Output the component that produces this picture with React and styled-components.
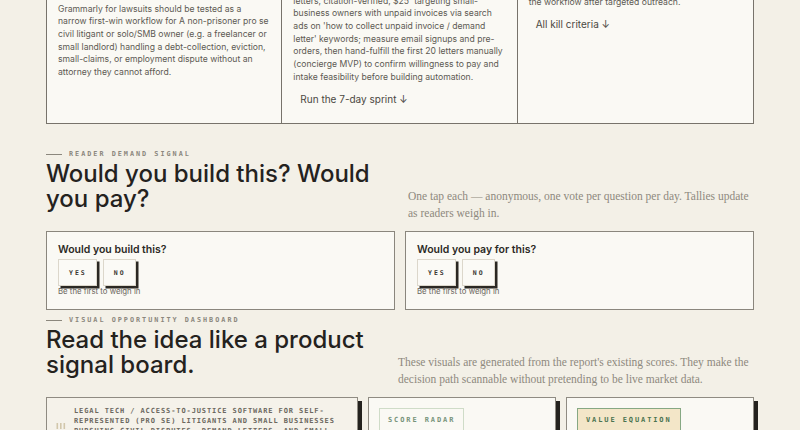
import React from 'react';
import styled, { createGlobalStyle } from 'styled-components';

const GlobalStyle = createGlobalStyle`
  body {
    margin: 0;
    background: #f3f0e7;
  }
  * {
    box-sizing: border-box;
  }
`;

const sans = `Inter, 'Liberation Sans', sans-serif`;
const mono = `'DejaVu Sans Mono', 'Liberation Mono', monospace`;
const serif = `'Liberation Serif', 'DejaVu Serif', serif`;

const Page = styled.div`
  width: 708px;
  margin: -7px auto 0;
  padding-bottom: 40px;
  font-family: ${sans};
`;

const TopRow = styled.div`
  display: grid;
  grid-template-columns: repeat(3, 1fr);
  min-height: 131px;
  border: 1px solid #77736b;
  border-top: none;
  background: #faf9f4;
`;

const PlanCard = styled.div`
  display: flex;
  flex-direction: column;
  align-items: flex-start;
  padding: ${(p) => p.lead}px ${(p) => p.right || 8}px 12px 11px;
  border-right: ${(p) => (p.last ? 'none' : '1px solid #77736b')};
`;

const PlanText = styled.p`
  margin: 0;
  font-size: 8.65px;
  line-height: 12.7px;
  color: #5d5a53;
`;

const PlanLink = styled.a`
  margin-top: 9px;
  padding-left: 7px;
  font-size: 10px;
  line-height: 14px;
  color: #4b4842;
  cursor: pointer;
`;

const SectionHead = styled.header`
  display: grid;
  grid-template-columns: ${(p) => p.left}px 1fr;
  align-items: end;
  margin-top: ${(p) => p.top}px;
`;

const HeadLeft = styled.div`
  padding-bottom: 11px;
`;

const Eyebrow = styled.div`
  display: flex;
  align-items: center;
  gap: 7px;
  font-family: ${mono};
  font-size: 6.8px;
  line-height: 10px;
  font-weight: 700;
  letter-spacing: 2px;
  text-transform: uppercase;
  color: #8b877d;

  &::before {
    content: '';
    width: 16px;
    height: 1px;
    background: #8b877d;
  }
`;

const Heading = styled.h2`
  margin: 2px 0 0;
  font-size: 24px;
  line-height: 25px;
  font-weight: 500;
  letter-spacing: 0;
  color: #24221e;
`;

const Lede = styled.p`
  margin: 0;
  font-family: ${serif};
  font-size: 11.5px;
  line-height: 17px;
  color: #8e897e;
`;

const VoteGrid = styled.div`
  display: grid;
  grid-template-columns: 1fr 1fr;
  gap: 10px;
  margin-top: 9px;
`;

const VoteCard = styled.div`
  padding: 11px 11px 13px;
  border: 1px solid #8a867d;
  background: #faf9f4;
`;

const VoteTitle = styled.div`
  font-size: 10.5px;
  line-height: 13px;
  font-weight: 600;
  color: #2b2925;
`;

const VoteButtons = styled.div`
  display: flex;
  gap: 6px;
  margin-top: 3px;
`;

const VoteButton = styled.button`
  height: 27px;
  padding: 0 9px 0 10px;
  border: 1px solid #dcd7cb;
  background: #fbfaf6;
  box-shadow: 2.5px 2.5px 0 #2b2823;
  font-family: ${mono};
  font-size: 6.5px;
  font-weight: 700;
  letter-spacing: 2px;
  color: #3a3731;
  cursor: pointer;
`;

const VoteNote = styled.div`
  font-size: 7.8px;
  line-height: 10px;
  color: #6a665e;
`;

const BoardGrid = styled.div`
  display: grid;
  grid-template-columns: 312px 1fr 1fr;
  gap: 10px;
  margin-top: 9px;
`;

const BoardCard = styled.div`
  display: flex;
  align-items: flex-start;
  gap: 8px;
  min-height: 60px;
  padding: ${(p) => (p.tone === 'tan' ? '8px 20px 8px 9px' : '10px')};
  border: 1px solid #8f8b82;
  background: ${(p) => (p.tone === 'tan' ? '#f5f2ea' : '#faf9f4')};
  box-shadow: 4px 4px 0 #24221e;
`;

const Segment = styled.div`
  font-family: ${mono};
  font-size: 7px;
  line-height: 10px;
  font-weight: 700;
  letter-spacing: 0.9px;
  color: #6c685f;
  text-transform: uppercase;
`;

const Tag = styled.span`
  display: inline-block;
  padding: 7px 8px 6px;
  font-family: ${mono};
  font-size: 7px;
  line-height: 9px;
  font-weight: 700;
  letter-spacing: 1.9px;
  border: 1px solid ${(p) => (p.strong ? '#86a883' : '#cfdcc8')};
  background: ${(p) => (p.strong ? '#f3e6c8' : 'transparent')};
  color: ${(p) => (p.strong ? '#4a7350' : '#77937a')};
`;

const BarsIcon = styled.svg`
  flex: none;
  margin-top: 15px;
`;

const Bars = () => (
  <BarsIcon width="10" height="8" viewBox="0 0 10 8">
    <rect x="0.5" y="2" width="1.6" height="6" fill="#d2c7ab" />
    <rect x="4" y="2" width="1.6" height="6" fill="#d2c7ab" />
    <rect x="7.5" y="2" width="1.6" height="6" fill="#d2c7ab" />
  </BarsIcon>
);

export default function App() {
  return (
    <>
      <GlobalStyle />
      <Page>
        <TopRow>
          <PlanCard lead={9.5} right={12}>
            <PlanText>
              Grammarly for lawsuits should be tested as a narrow first-win workflow for A
              non-prisoner pro se civil litigant or solo/SMB owner (e.g. a freelancer or small
              landlord) handling a debt-collection, eviction, small-claims, or employment dispute
              without an attorney they cannot afford.
            </PlanText>
          </PlanCard>
          <PlanCard lead={1.5}>
            <PlanText>
              letters, citation-verified, $25' targeting small-business owners with unpaid
              invoices via search ads on 'how to collect unpaid invoice / demand letter' keywords;
              measure email signups and pre-orders, then hand-fulfill the first 20 letters
              manually (concierge MVP) to confirm willingness to pay and intake feasibility before
              building automation.
            </PlanText>
            <PlanLink>Run the 7-day sprint ↓</PlanLink>
          </PlanCard>
          <PlanCard lead={2.5} last>
            <PlanText>the workflow after targeted outreach.</PlanText>
            <PlanLink>All kill criteria ↓</PlanLink>
          </PlanCard>
        </TopRow>

        <SectionHead left={362} top={25}>
          <HeadLeft>
            <Eyebrow>Reader demand signal</Eyebrow>
            <Heading>
              Would you build this? Would
              <br />
              you pay?
            </Heading>
          </HeadLeft>
          <Lede>
            One tap each — anonymous, one vote per question per day. Tallies update as readers
            weigh in.
          </Lede>
        </SectionHead>

        <VoteGrid>
          {['Would you build this?', 'Would you pay for this?'].map((q) => (
            <VoteCard key={q}>
              <VoteTitle>{q}</VoteTitle>
              <VoteButtons>
                <VoteButton>YES</VoteButton>
                <VoteButton>NO</VoteButton>
              </VoteButtons>
              <VoteNote>Be the first to weigh in</VoteNote>
            </VoteCard>
          ))}
        </VoteGrid>

        <SectionHead left={352} top={5}>
          <HeadLeft>
            <Eyebrow>Visual opportunity dashboard</Eyebrow>
            <Heading>
              Read the idea like a product
              <br />
              signal board.
            </Heading>
          </HeadLeft>
          <Lede>
            These visuals are generated from the report's existing scores. They make the decision
            path scannable without pretending to be live market data.
          </Lede>
        </SectionHead>

        <BoardGrid>
          <BoardCard tone="tan">
            <Bars />
            <Segment>
              Legal tech / access-to-justice software for self-represented (pro se) litigants and
              small businesses pursuing civil disputes, demand letters, and small claims
            </Segment>
          </BoardCard>
          <BoardCard>
            <Tag>SCORE RADAR</Tag>
          </BoardCard>
          <BoardCard>
            <Tag strong>VALUE EQUATION</Tag>
          </BoardCard>
        </BoardGrid>
      </Page>
    </>
  );
}
